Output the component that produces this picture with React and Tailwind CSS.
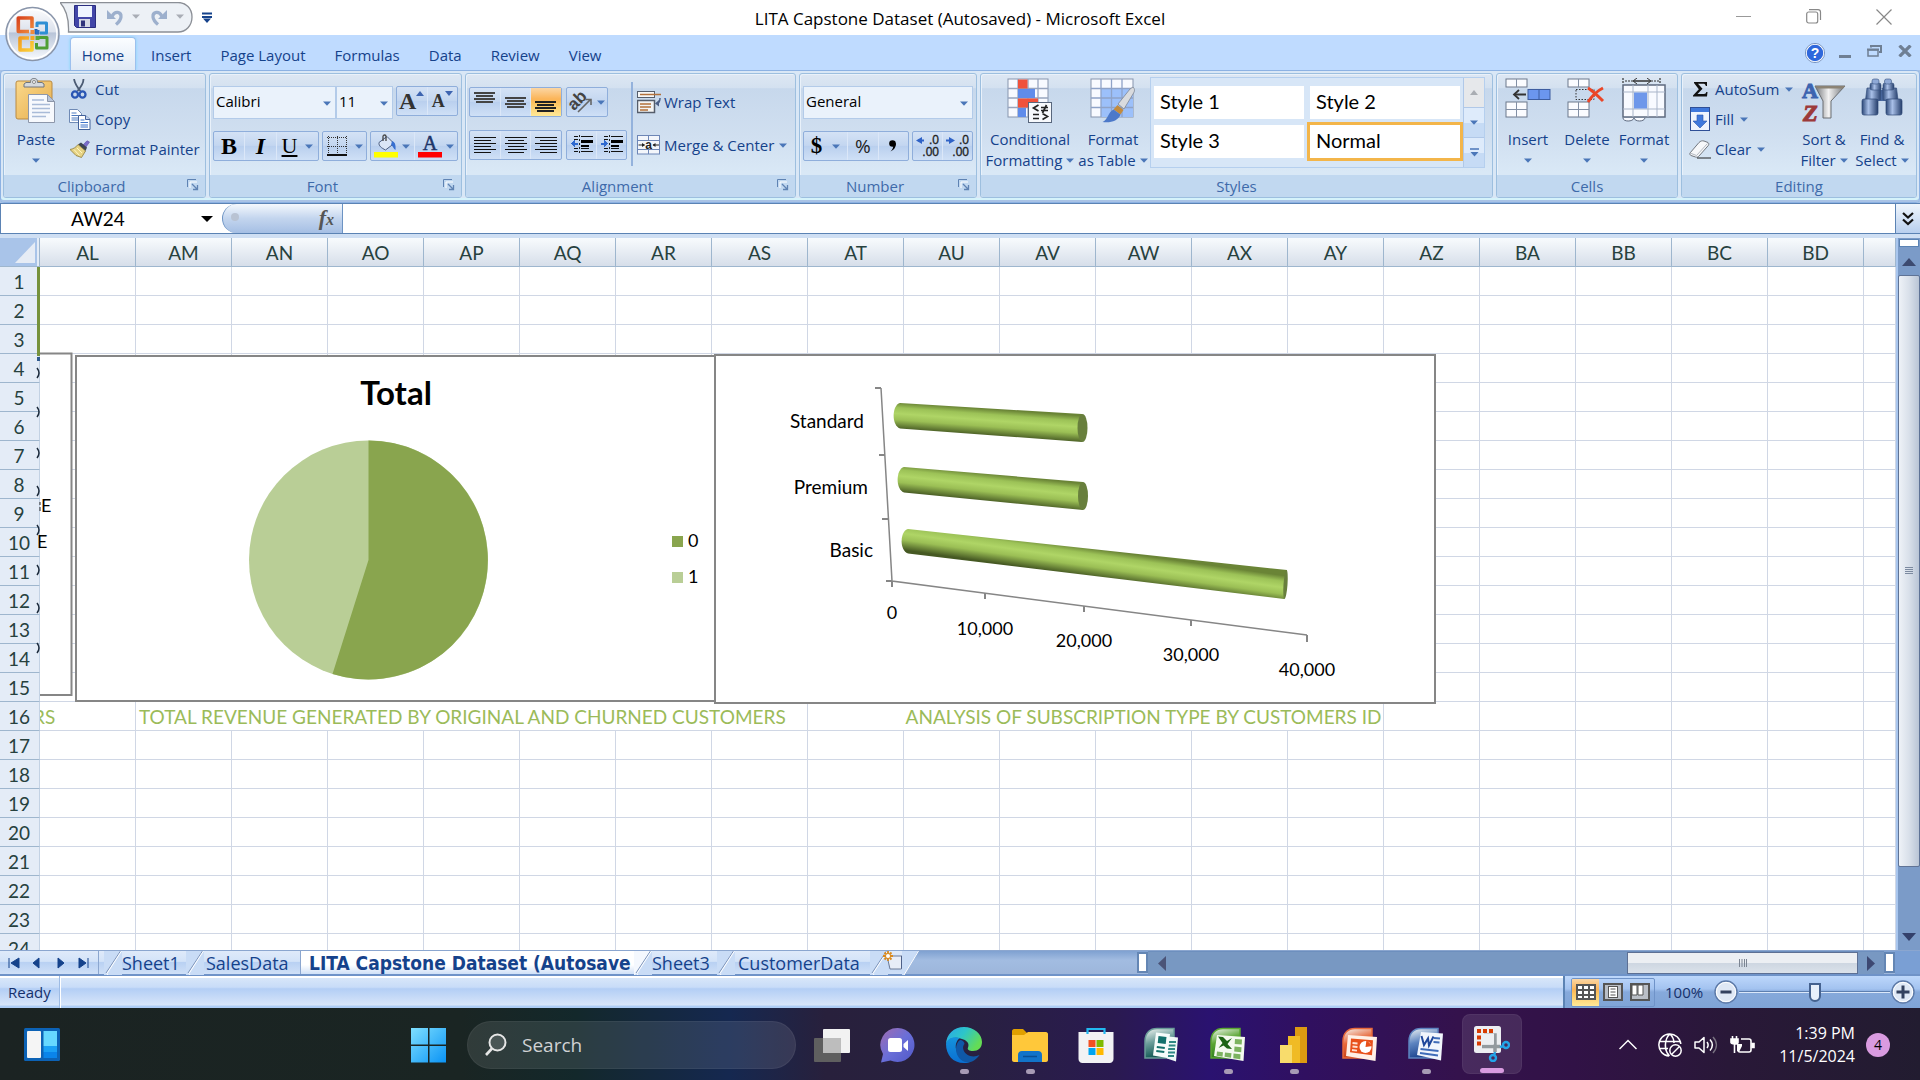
import React from "react";

const UI = "font-['Open_Sans','Noto_Sans',sans-serif]";
const GRID = "font-[Lato,'Noto_Sans',sans-serif]";

const Down = ({ c = "#4a76b8" }) => (
  <svg width="8" height="5" viewBox="0 0 8 5" className="shrink-0"><path d="M0 0.5h8L4 4.8z" fill={c} /></svg>
);

/* ---------- small drawing helpers ---------- */
const Lines = ({ rows, c = "#111", w = 24, h = 20 }) => (
  <svg width={w} height={h} viewBox={`0 0 ${w} ${h}`} shapeRendering="crispEdges">
    {rows.map(([x, y, l, t = 1], i) => <rect key={i} x={x} y={y} width={l} height={t} fill={c} />)}
  </svg>
);

const PasteIcon = () => (
  <svg width="42" height="46" viewBox="0 0 42 46">
    <defs><linearGradient id="pst" x1="0" y1="0" x2="1" y2="1"><stop offset="0" stopColor="#fbd98c" /><stop offset="1" stopColor="#e5ad4c" /></linearGradient></defs>
    <rect x="1" y="3" width="36" height="38" rx="2" fill="url(#pst)" stroke="#b98a42" />
    <path d="M9 9V6l2-1.500h4.500C15.500 1 17 .5 19 .5s3.500.5 3.500 4H27L29 6v3z" fill="#d5d9dd" stroke="#70757c" />
    <circle cx="19" cy="4" r="1.500" fill="#fff" stroke="#666" strokeWidth=".7" />
    <path d="M13.500 16.500h19l7 7v21h-26z" fill="#f7f9fd" stroke="#8d97aa" />
    <path d="M32.500 16.500v7h7z" fill="#b9c5d9" stroke="#8d97aa" />
    <path d="M17 22h12M17 26.500h18M17 30.500h18M17 34.500h18M17 38.500h14" stroke="#a9bbd8" strokeWidth="1.300" />
  </svg>
);
const CutIcon = () => (
  <svg width="20" height="20" viewBox="0 0 20 20">
    <path d="M4 0c1 5 3 8 6.500 12M13.500 0c0 5-2.500 8-6 12" stroke="#4b5b73" strokeWidth="1.800" fill="none" />
    <ellipse cx="5" cy="15.500" rx="3" ry="3.200" fill="none" stroke="#2a56b4" strokeWidth="2.300" />
    <ellipse cx="12.500" cy="15.500" rx="3" ry="3.200" fill="none" stroke="#2a56b4" strokeWidth="2.300" />
  </svg>
);
const CopyIcon = () => (
  <svg width="22" height="21" viewBox="0 0 22 21">
    <path d="M.5.500h8l4 4v9H.5z" fill="#fff" stroke="#6f8ab5" /><path d="M2.500 4h5M2.500 6.500h7M2.500 9h7M2.500 11h7" stroke="#4d7ac0" />
    <path d="M9.500 6.500h7l4.500 4v10H9.500z" fill="#fff" stroke="#43629b" /><path d="M16.500 6.500v4H21" fill="#c8d6ee" stroke="#43629b" /><path d="M11.500 11h4M11.500 13.500h7.500M11.500 16h7.500M11.500 18h7.500" stroke="#3f73c8" />
  </svg>
);
const PainterIcon = () => (
  <svg width="20" height="18" viewBox="0 0 20 18">
    <path d="M13 5L17 0.800 19.500 2 16 7z" fill="#7a6cc9" stroke="#5a4da4" strokeWidth=".6" />
    <path d="M8 4.500l3-2 6 5-1.500 3.500z" fill="#3d4653" />
    <path d="M8 4.500L15.500 11 11.500 17.500 6 15.500 0 9.500C3 9 6 7.500 8 4.500z" fill="#e6d384" stroke="#8f7b36" strokeWidth=".8" />
    <path d="M4 9.500l5.500 6M7 8l5 5" stroke="#fff6c4" />
  </svg>
);
const FillColor = () => (
  <svg width="24" height="24" viewBox="0 0 24 24">
    <path d="M5 8.500L13 2.500l7 7-8.500 6.500c-4-2-7-4-6.500-7.500z" fill="#dbe6f6" stroke="#4c5e80" />
    <path d="M9 7V2.500C9 .5 12 .5 12 2.500V7" fill="none" stroke="#444" strokeWidth="1.300" />
    <path d="M18 7c3 1 4 4 3.500 9-2-1-2.500-4-4.500-5z" fill="#376fd0" />
    <rect y="18" width="24" height="5.500" fill="#ffff00" />
  </svg>
);
const BorderIcon = () => (
  <svg width="20" height="21" viewBox="0 0 20 21" shapeRendering="crispEdges">
    <path d="M0 1h20M0 10h20M1 0v17M10 0v17M19 0v17" stroke="#333" strokeWidth="1" strokeDasharray="1 1" />
    <rect y="18" width="20" height="2" fill="#111" />
  </svg>
);
const OrientIcon = () => (
  <svg width="24" height="22" viewBox="0 0 24 22" className="overflow-visible">
    <text x="-1" y="16" transform="rotate(-45 7 11)" fontSize="17" fontWeight="700" fontFamily="Liberation Sans" fill="#444">ab</text>
    <path d="M9 21L21 9M16.500 8.500H22V14" stroke="#666" strokeWidth="1.600" fill="none" />
  </svg>
);
const IndentIcon = ({ inc }) => (
  <svg width="22" height="20" viewBox="0 0 22 20" shapeRendering="crispEdges">
    <path d="M3 1.500h4M10 1.500h12M10 13.500h8M3 16.500h4M10 16.500h12M3 4h4M3 13.500h4" stroke="#111" />
    <rect x="10" y="5" width="12" height="3" /><rect x="10" y="10" width="8" height="2" />
    <path d="M8.500 0v20" stroke="#222" strokeDasharray="2 2" />
    <path d={inc ? "M0 8.500h5" : "M2 8.500h5"} stroke="#2f6ad0" strokeWidth="2" />
    <path d={inc ? "M3 5l4 3.500L3 12z" : "M4 5L0 8.500 4 12z"} fill="#2f6ad0" />
  </svg>
);
const WrapIcon = () => (
  <svg width="24" height="23" viewBox="0 0 24 23">
    <rect x=".5" y=".5" width="17" height="6" fill="#f7f7f7" stroke="#555d6b" /><path d="M3 3.500h21" stroke="#b3703a" strokeWidth="1.500" />
    <rect x=".5" y="9.500" width="17" height="12" fill="#f4f4f4" stroke="#555d6b" strokeWidth="1.500" /><path d="M3 13h11M3 16h11M3 19h8" stroke="#b3703a" strokeWidth="1.400" />
    <path d="M23 7c0 4-1 5-3 5.500" fill="none" stroke="#4c5f86" strokeWidth="1.500" /><path d="M22 9l-4 3.500 4 3z" fill="#4c5f86" />
  </svg>
);
const MergeIcon = () => (
  <svg width="24" height="20" viewBox="0 0 24 20">
    <rect x=".5" y=".5" width="22" height="18.500" fill="#f3f6fb" stroke="#6d86b6" /><path d="M.5 5.500h22M.5 14.500h22M11.500 .5v5M11.500 14.500V19" stroke="#6d86b6" />
    <path d="M1.500 10h6M16 10h6" stroke="#222" strokeWidth="1.200" /><path d="M5 8v4l3-2zM18.500 8v4l-3-2z" fill="#222" />
    <text x="11.500" y="14" textAnchor="middle" fontSize="12" fontWeight="700" fontFamily="Liberation Sans" fill="#222">a</text>
  </svg>
);
const DecIcon = ({ right }) => (
  <svg width="24" height="26" viewBox="0 0 24 26">
    <path d={right ? "M0 7.500h5" : "M2 7.500h6"} stroke="#2f62c6" strokeWidth="2" /><path d={right ? "M3 4l6 3.500L3 11z" : "M6 4L0 7.500 6 11z"} fill="#2f62c6" />
    <g textAnchor="end" fontSize="12" fontFamily="Liberation Sans" fill="#222" stroke="#222" strokeWidth=".3">
      <text x="23" y="11">.0</text><text x="23" y="23">.00</text>
    </g>
  </svg>
);
const CondIcon = () => (
  <svg width="46" height="46" viewBox="0 0 46 46">
    <rect x="1" y="1" width="40" height="38" fill="#f8faff" stroke="#8795ad" />
    <path d="M1 10.500h40M1 20h40M1 29.500h40M11 1v38M21 1v38M31 1v38" stroke="#97a5bf" strokeWidth="1.300" />
    <rect x="11" y="1.500" width="9.500" height="9" fill="#f0523c" /><rect x="11" y="11" width="17" height="9" fill="#5f8ceb" /><rect x="11" y="20.500" width="20" height="9" fill="#f0523c" /><rect x="11" y="30" width="8" height="9" fill="#5f8ceb" />
    <rect x="21.500" y="24.500" width="23" height="20" fill="#f7f9fc" stroke="#59677d" />
    <path d="M31.500 27l-5 3 5 3M26 36.500h6M26 40.500h6M34 29.500h7M34 32.500h7M39.500 27l-4 8M35.500 35.500l5 3-5 3" fill="none" stroke="#222" strokeWidth="1.700" />
  </svg>
);
const TableIcon = () => (
  <svg width="46" height="46" viewBox="0 0 46 46">
    <rect x="1" y="1" width="42" height="38" fill="#f8faff" stroke="#8795ad" /><rect x="11" y="11" width="32" height="28" fill="#9cc0fa" />
    <path d="M1 10.500h42M1 20h42M1 29.500h42M11 1v38M21.500 1v38M32 1v38" stroke="#8fa3c8" strokeWidth="1.300" />
    <path d="M43 9c2 2 2 4 0 7L34 31l-6-5 12-15z" fill="#d9dbde" stroke="#7d8794" strokeWidth=".8" />
    <path d="M27.500 27l6 5-3 4.500-7-5z" fill="#c38b3d" /><path d="M23.500 31.500l7 5C28 43 21 45 12.500 44 18 42 18 34 23.500 31.500z" fill="#4d79c9" />
  </svg>
);
const CellRows = ({ x, y }) => (
  <g><rect x={x} y={y} width="21" height="15" fill="#fbfcff" stroke="#6c788c" /><path d={`M${x} ${y + 7.500}h21M${x + 10.500} ${y}v15`} stroke="#8390a5" /></g>
);
const InsertIcon = () => (
  <svg width="46" height="42" viewBox="0 0 46 42">
    <rect x="1" y="1" width="21" height="8" fill="#fbfcff" stroke="#6c788c" /><path d="M11.500 1v8" stroke="#8390a5" /><CellRows x={1} y={24} />
    <rect x="23" y="11.500" width="22" height="10" fill="#6b96ee" stroke="#3d5da0" /><path d="M34 11.500v10" stroke="#3d5da0" />
    <path d="M10 16.500h11" stroke="#333" strokeWidth="2" /><path d="M14 12l-5 4.500 5 4.500" fill="none" stroke="#333" strokeWidth="1.800" />
  </svg>
);
const DeleteIcon = () => (
  <svg width="40" height="42" viewBox="0 0 40 42">
    <rect x="1" y="1" width="21" height="8" fill="#fbfcff" stroke="#6c788c" /><path d="M11.500 1v8" stroke="#8390a5" /><CellRows x={1} y={24} />
    <rect x="9" y="11.500" width="18" height="10" fill="none" stroke="#333" strokeDasharray="1.500 1.500" />
    <path d="M21 10c5 3 10 8 15 13M36 10c-6 3-11 8-15 14" stroke="#ea4627" strokeWidth="3" fill="none" />
  </svg>
);
const FormatIcon = () => (
  <svg width="46" height="46" viewBox="0 0 46 46">
    <path d="M2 0v6M39 0v6M4 3h8M30 3h8" stroke="#333" strokeWidth="1.200" strokeDasharray="2 1" /><path d="M13 3h16" stroke="#333" strokeWidth="1.500" /><path d="M16 0l-4 3 4 3M26 0l4 3-4 3" fill="none" stroke="#333" />
    <rect x="2" y="7" width="42" height="32" fill="#f8faff" stroke="#5e6a7f" strokeWidth="1.500" /><path d="M2 14h42M2 31h42M12 7v32M27 7v32M36 7v32" stroke="#a9b5c9" />
    <rect x="13" y="14.500" width="13" height="16" fill="#6e97ea" /><path d="M2 40c0 4 10 4 11 0 1 4 10 4 11 0" fill="#f8faff" stroke="#5e6a7f" />
  </svg>
);
const SortIcon = () => (
  <svg width="46" height="49" viewBox="0 0 46 49">
    <defs><linearGradient id="fun" x1="0" x2="1"><stop offset="0" stopColor="#6f7276" /><stop offset=".45" stopColor="#f2f2f2" /><stop offset="1" stopColor="#707377" /></linearGradient></defs>
    <path d="M14 8h30L30 23v17h-8V23z" fill="url(#fun)" stroke="#6b6e72" /><path d="M14 8h30l-2 2.500H17z" fill="#8b8375" />
    <text x="1" y="20" fontSize="22" fontWeight="700" fontFamily="Liberation Serif" fill="#3d64b0" stroke="#3d64b0">A</text>
    <text x="2" y="43" fontSize="24" fontWeight="700" fontStyle="italic" fontFamily="Liberation Serif" fill="#9c3a3a" stroke="#9c3a3a">Z</text>
  </svg>
);
const FindIcon = () => (
  <svg width="42" height="40" viewBox="0 0 42 40">
    <defs><linearGradient id="bin" x1="0" x2="1"><stop offset="0" stopColor="#2c4878" /><stop offset=".4" stopColor="#a9c0e8" /><stop offset="1" stopColor="#263f6c" /></linearGradient></defs>
    <rect x="17" y="12" width="8" height="11" fill="#49679e" />
    {[0, 24].map((x) => (
      <g key={x}>
        <path d={x ? "M21.500 10h14l1.500 12H22z" : "M6 10h14l-.5 12H4.500z"} fill="url(#bin)" stroke="#36527f" strokeWidth=".7" />
        <rect x={x ? 22 : 9} y="5" width="11" height="7" rx="2" fill="url(#bin)" stroke="#36527f" strokeWidth=".6" /><rect x={x ? 23.500 : 11} y="1" width="7" height="5" rx="2" fill="#8fa9d6" stroke="#36527f" strokeWidth=".6" />
        <rect x={x + 1} y="21" width="16" height="16" rx="2" fill="url(#bin)" stroke="#2e4977" strokeWidth=".7" />
      </g>
    ))}
  </svg>
);

/* ---------- ribbon pieces ---------- */
const Group = ({ name, w, launcher, children }) => (
  <section className={`${w} flex flex-col rounded-[3px] border border-[#9dbfdf] bg-[linear-gradient(180deg,#dde7f3_0%,#d4e1f0_11%,#c7d8ec_12%,#d0dff0_50%,#d9e8f6_80%)] shadow-[inset_1px_1px_0_#e9f1fa]`}>
    <div className="flex h-[101px] min-w-0">{children}</div>
    <div className={`relative flex flex-1 items-center justify-center rounded-b-[2px] bg-[#c1d8f0] text-[15px] leading-5 text-[#3e6aaa] ${launcher ? "pr-[26px]" : ""}`}>
      {name}
      {launcher && (
        <button aria-label={`${name} options`} className="absolute right-1.5 top-1">
          <svg width="12" height="12" viewBox="0 0 12 12"><path d="M.5 8V.500H9" fill="none" stroke="#5f83b3" /><path d="M5 5l5 5M10.500 6v4.500H6" stroke="#5f83b3" strokeWidth="1.300" fill="none" /><path d="M3 9V3h7" stroke="#fff" fill="none" /></svg>
        </button>
      )}
    </div>
  </section>
);
const BtnSet = ({ w, children }) => (
  <div className={`flex h-[30px] ${w} divide-x divide-[#dbe7f8] rounded-[2px] border border-[#8faedb] bg-[linear-gradient(180deg,#d4e2f5_0%,#c3d6f0_48%,#b9cfee_50%,#cfe0f6_100%)]`}>{children}</div>
);
const IB = ({ label, w = "flex-1", on, children }) => (
  <button aria-label={label} className={`flex ${w} items-center justify-center gap-1 ${on ? "bg-[linear-gradient(180deg,#fbd6a4_0%,#fbb457_40%,#fdc562_55%,#ffe997_100%)]" : ""}`}>{children}</button>
);
const Row = ({ icon, children, arrow }) => (
  <button className="flex h-[30px] items-center gap-1 whitespace-nowrap text-[15px] text-[#15428b]">
    <span className="flex w-[22px] justify-center">{icon}</span>{children}{arrow && <span className="pl-0.5"><Down /></span>}
  </button>
);
const Big = ({ icon, a, b, w }) => (
  <button className={`flex ${w} shrink-0 flex-col items-center pt-1 text-[15px] leading-[21px] text-[#15428b]`}>
    <span className="flex h-[51px] items-start">{icon}</span>
    <span className="whitespace-nowrap">{a}</span>
    <span className="flex h-[21px] items-center gap-1 whitespace-nowrap">{b}<Down /></span>
  </button>
);
const Combo = ({ label, value, w }) => (
  <div className={`relative h-[33px] ${w} border border-[#b3cbe9] bg-[#eaf2fb]`}>
    <select aria-label={label} className="h-7 w-full appearance-none bg-transparent px-0.5 text-[15px] text-black outline-none"><option>{value}</option></select>
    <span className="pointer-events-none absolute right-1 top-3.5 flex"><Down /></span>
  </div>
);
const GStyle = ({ children, on }) => (
  <button className={`h-[33px] bg-white px-1.5 pb-0.5 text-left text-[20px] leading-6 text-black ${GRID} ${on ? "outline-3 outline-[#f3b54a]" : ""}`}>{children}</button>
);

function TitleBar() {
  return (
    <header className="relative flex h-[35px] shrink-0 items-center justify-center bg-white">
      <div className="absolute left-[60px] top-0.5 flex items-center">
        <svg width="134" height="31" viewBox="0 0 134 31" className="absolute left-0 top-0"><path d="M0 .5h118c8 0 14 6 14 14.500S126 30 118 30H8.500C9 18 7 8 0 .5z" fill="#edf1f6" stroke="#8b8f96" strokeWidth="1.300" /></svg>
        <div className="relative flex h-[29px] items-center pl-3.5">
          <button aria-label="Save"><svg width="22" height="23" viewBox="0 0 22 23"><path d="M.5.500h21v22H2.500l-2-2z" fill="#4246a8" stroke="#2b2e80" /><rect x="4" y="1" width="14" height="11" fill="#eef4ff" /><rect x="5" y="14" width="11" height="8" fill="#d6dae6" /><rect x="7" y="15.500" width="4" height="6" fill="#30347c" /></svg></button>
          <button aria-label="Undo" className="ml-2.5 flex items-center gap-2"><svg width="18" height="18" viewBox="0 0 18 18"><path d="M6 8.500C9 2 15.500 4 15 9c-.3 3-2 5-5 7.500" fill="none" stroke="#9db0cd" strokeWidth="3.200" /><path d="M1 2v9h9z" fill="#9db0cd" /></svg><Down c="#a9adb5" /></button>
          <button aria-label="Redo" className="ml-2.5 flex items-center gap-2"><svg width="18" height="18" viewBox="0 0 18 18"><path d="M12 8.500C9 2 2.500 4 3 9c.3 3 2 5 5 7.500" fill="none" stroke="#9db0cd" strokeWidth="3.200" /><path d="M17 2v9H8z" fill="#9db0cd" /></svg><Down c="#a9adb5" /></button>
        </div>
      </div>
      <button aria-label="Customize toolbar" className="absolute left-[202px] top-3"><svg width="10" height="12" viewBox="0 0 10 12"><path d="M0 1.500h10M0 5h10" stroke="#15428b" strokeWidth="2" /><path d="M1 6.500h8L5 11z" fill="#15428b" /></svg></button>
      <h1 className="pt-0.5 text-[17px] text-black">LITA Capstone Dataset (Autosaved) - Microsoft Excel</h1>
      <div className="absolute right-7 top-2 flex items-center gap-[54px]">
        <button aria-label="Minimize"><svg width="16" height="18" viewBox="0 0 16 18"><path d="M0 8.500h15" stroke="#999" /></svg></button>
        <button aria-label="Restore"><svg width="16" height="18" viewBox="0 0 16 18"><rect x=".7" y="4" width="11" height="11" rx="2" fill="none" stroke="#888" strokeWidth="1.200" /><path d="M3 1.600h9c2 0 2.500 1 2.500 2.500V12" fill="none" stroke="#888" strokeWidth="1.200" /></svg></button>
        <button aria-label="Close"><svg width="16" height="18" viewBox="0 0 16 18"><path d="M.5 1.500l15 15M15.500 1.500L.5 16.500" stroke="#888" strokeWidth="1.200" /></svg></button>
      </div>
    </header>
  );
}

const OfficeButton = () => (
  <button aria-label="Office Button" className="absolute left-1 top-1.5 z-20">
    <svg width="57" height="57" viewBox="0 0 57 57">
      <defs>
        <linearGradient id="orb" x1="0" y1="0" x2="0" y2="1"><stop offset="0" stopColor="#fdfdfe" /><stop offset=".46" stopColor="#dbe1ec" /><stop offset=".48" stopColor="#b8c4d8" /><stop offset="1" stopColor="#fafcff" /></linearGradient>
        <linearGradient id="lgo" x1="0" y1="0" x2="1" y2="1"><stop offset="0" stopColor="#d8431c" /><stop offset="1" stopColor="#f08a3c" /></linearGradient>
        <linearGradient id="lgy" x1="0" y1="0" x2="1" y2="1"><stop offset="0" stopColor="#f39b1e" /><stop offset="1" stopColor="#fbd03a" /></linearGradient>
      </defs>
      <circle cx="28.500" cy="28" r="26.500" fill="url(#orb)" stroke="#8995aa" strokeWidth="1.500" /><circle cx="28.500" cy="28" r="24.500" fill="none" stroke="#fff" strokeWidth="1.500" />
      <g fill="none" strokeWidth="3.600" strokeLinejoin="round">
        <path d="M25 25.500H14.300V12H28V22" stroke="url(#lgo)" /><path d="M33 21v-4h9.500v10H36" stroke="#2f8fd4" strokeWidth="3" /><path d="M32 23v4h3" stroke="#1f5fb0" strokeWidth="3" />
        <path d="M25 32H16v12h12V35" stroke="url(#lgy)" /><path d="M35 31.500h8V42H32.500v-5" stroke="#4f9f34" strokeWidth="3" />
      </g>
      <rect x="26.500" y="24" width="4" height="4" fill="#f08a3c" /><rect x="31.500" y="24" width="4" height="4" fill="#2a6fc4" /><rect x="26.500" y="30" width="4" height="4" fill="#f5a623" /><rect x="31.500" y="30" width="4" height="4" fill="#5aa63a" />
    </svg>
  </button>
);

function Tabs() {
  const tabs = ["Insert", "Page Layout", "Formulas", "Data", "Review", "View"];
  return (
    <nav className="flex h-[35px] shrink-0 items-end bg-[#bfdbff] pl-[70px]">
      <button className="h-[33px] w-[66px] rounded-t-[4px] border border-b-0 border-[#9cc0ee] bg-[linear-gradient(180deg,#fbfdff,#dfe9f5)] pt-0.5 text-[15px] leading-5 text-[#15428b] shadow-[0_0_3px_#7fd6f5]">Home</button>
      <div className="flex h-[33px] items-center gap-[29px] pl-[15px] pt-[3px] text-[15px] text-[#15428b]">
        {tabs.map((t) => <button key={t}>{t}</button>)}
      </div>
      <div className="ml-auto flex h-[33px] items-center pr-2">
        <button aria-label="Help" className="pb-0.5"><svg width="20" height="20" viewBox="0 0 20 20"><circle cx="10" cy="10" r="9" fill="#2f68dc" stroke="#fff" strokeWidth="1.500" /><circle cx="10" cy="10" r="9.600" fill="none" stroke="#4a6fa8" strokeWidth=".7" /><text x="10" y="15" textAnchor="middle" fontSize="14" fontWeight="700" fontFamily="Liberation Sans" fill="#fff">?</text></svg></button>
        <button aria-label="Minimize workbook" className="ml-3.5 pt-1.5"><svg width="12" height="4"><rect width="12" height="3" fill="#6f7f94" /></svg></button>
        <button aria-label="Restore workbook" className="ml-4 pb-1.5"><svg width="15" height="12" viewBox="0 0 15 12"><path d="M4 2.500V1h10v6h-2" fill="none" stroke="#6f7f94" strokeWidth="2" /><rect x="1" y="5" width="10" height="6" fill="none" stroke="#6f7f94" strokeWidth="1.500" /><path d="M0 4.500h12" stroke="#6f7f94" strokeWidth="2" /></svg></button>
        <button aria-label="Close workbook" className="ml-4 pb-1.5"><svg width="14" height="12" viewBox="0 0 14 12"><path d="M1.500 0.500L12.500 11.500M12.500.5L1.500 11.500" stroke="#6f7f94" strokeWidth="3.200" /></svg></button>
      </div>
    </nav>
  );
}

function Ribbon() {
  return (
    <div className="shrink-0 bg-[#a9c3e6]">
      <div className="flex h-[133px] gap-[3px] rounded-[4px] border border-[#8db2e3] bg-[#d9e7f6] px-0.5 pb-1 pt-0.5 shadow-[inset_0_-2px_0_#a9c3e6,inset_0_-4px_0_#d5f3fb]">
        <Group name="Clipboard" w="w-[203px]" launcher>
          <Big w="w-[64px]" icon={<PasteIcon />} a="Paste" />
          <div className="flex flex-col pl-px"><Row icon={<CutIcon />}>Cut</Row><Row icon={<CopyIcon />}>Copy</Row><Row icon={<PainterIcon />}>Format Painter</Row></div>
        </Group>
        <Group name="Font" w="w-[253px]" launcher>
          <div className="flex flex-1 flex-col gap-3 px-[3px] pt-3">
            <div className="flex gap-[3px]">
              <div className="flex"><Combo label="Font" value="Calibri" w="w-[123px]" /><Combo label="Font size" value="11" w="w-[57px]" /></div>
              <BtnSet w="flex-1">
                <IB label="Grow font"><span className="flex items-start font-['Liberation_Serif',serif] text-[24px] font-bold leading-7 text-[#333]">A<svg width="8" height="5" viewBox="0 0 8 5" className="mt-1"><path d="M0 5h8L4 0z" fill="#3d64b0" /></svg></span></IB>
                <IB label="Shrink font"><span className="flex items-end font-['Liberation_Serif',serif] text-[18px] font-bold leading-[22px] text-[#333]">A<svg width="8" height="18" viewBox="0 0 8 18" className="self-start"><path d="M0 1h8L4 6z" fill="#3d64b0" /></svg></span></IB>
              </BtnSet>
            </div>
            <div className="flex justify-between">
              <BtnSet w="w-[106px]">
                <IB label="Bold" w="w-[31px]"><span className="font-['Liberation_Serif',serif] text-[24px] font-bold leading-7">B</span></IB>
                <IB label="Italic" w="w-[32px]"><span className="font-['Liberation_Serif',serif] text-[24px] font-bold italic leading-7">I</span></IB>
                <IB label="Underline"><span className="font-['Liberation_Serif',serif] text-[22px] leading-7 underline">U</span><span className="pl-1"><Down /></span></IB>
              </BtnSet>
              <BtnSet w="w-[45px]"><IB label="Borders"><BorderIcon /><span className="pl-1"><Down /></span></IB></BtnSet>
              <BtnSet w="w-[88px]">
                <IB label="Fill color"><FillColor /><Down /></IB>
                <IB label="Font color"><svg width="24" height="24" viewBox="0 0 24 24" className="overflow-visible"><text x="12" y="16" textAnchor="middle" fontSize="20" fontFamily="Liberation Serif" fill="#1c3468" stroke="#1c3468" strokeWidth=".5">A</text><rect y="18" width="24" height="5.500" fill="#f00" /></svg><Down /></IB>
              </BtnSet>
            </div>
          </div>
        </Group>
        <Group name="Alignment" w="w-[331px]" launcher>
          <div className="flex flex-col gap-[13px] pl-[3px] pt-[13px]">
            <div className="flex gap-1">
              <BtnSet w="w-[93px]">
                <IB label="Top align"><Lines c="#444" rows={[[1, 0, 21, 2], [3, 3, 17, 2], [1, 6, 21, 2], [3, 9, 17, 2]]} /></IB>
                <IB label="Middle align"><Lines c="#444" rows={[[1, 5, 21, 2], [3, 8, 17, 2], [1, 11, 21, 2], [3, 14, 17, 2]]} /></IB>
                <IB label="Bottom align" on><Lines c="#222" rows={[[1, 9, 21, 2], [3, 12, 17, 2], [1, 15, 21, 2], [3, 18, 17, 2]]} /></IB>
              </BtnSet>
              <BtnSet w="w-[42px]"><IB label="Orientation"><OrientIcon /><Down /></IB></BtnSet>
            </div>
            <div className="flex gap-1">
              <BtnSet w="w-[93px]">
                <IB label="Align left"><Lines rows={[[1, 2, 22], [1, 5, 17], [1, 8, 22], [1, 11, 17], [1, 14, 22], [1, 17, 17]]} /></IB>
                <IB label="Center"><Lines rows={[[1, 2, 22], [4, 5, 16], [1, 8, 22], [4, 11, 16], [1, 14, 22], [4, 17, 16]]} /></IB>
                <IB label="Align right"><Lines rows={[[1, 2, 22], [6, 5, 17], [1, 8, 22], [6, 11, 17], [1, 14, 22], [6, 17, 17]]} /></IB>
              </BtnSet>
              <BtnSet w="w-[61px]"><IB label="Decrease indent"><IndentIcon /></IB><IB label="Increase indent"><IndentIcon inc /></IB></BtnSet>
            </div>
          </div>
          <div className="mx-1 mt-2 h-[84px] w-0.5 bg-[#94b2dc]" />
          <div className="flex flex-col gap-[13px] pt-[13px] text-[15px] text-[#15428b]">
            <button className="flex h-[30px] items-center gap-[3px]"><WrapIcon />Wrap Text</button>
            <button className="flex h-[30px] items-center gap-[3px] whitespace-nowrap"><MergeIcon />Merge &amp; Center<span className="pl-0.5"><Down /></span></button>
          </div>
        </Group>
        <Group name="Number" w="w-[178px]" launcher>
          <div className="flex flex-1 flex-col gap-3 px-[3px] pt-3">
            <Combo label="Number format" value="General" w="w-full" />
            <div className="flex justify-between">
              <BtnSet w="w-[106px]">
                <IB label="Accounting format" w="w-[44px]"><span className="font-['Liberation_Serif',serif] text-[23px] font-bold leading-7">$</span><span className="pl-1.5"><Down /></span></IB>
                <IB label="Percent"><span className="text-[19px] leading-7 text-[#222]">%</span></IB>
                <IB label="Comma"><svg width="8" height="12" viewBox="0 0 8 12"><circle cx="3.500" cy="3.500" r="3.300" /><path d="M6.800 3c.5 4-1.800 7-5.300 8.500C4 9 4.500 7 4 5z" /></svg></IB>
              </BtnSet>
              <BtnSet w="w-[61px]"><IB label="Increase decimal"><DecIcon /></IB><IB label="Decrease decimal"><DecIcon right /></IB></BtnSet>
            </div>
          </div>
        </Group>
        <Group name="Styles" w="min-w-0 flex-1">
          <Big w="w-[98px]" icon={<CondIcon />} a="Conditional" b="Formatting" />
          <Big w="w-[68px]" icon={<TableIcon />} a="Format" b="as Table" />
          <div className="ml-[3px] mr-[7px] mt-[3px] flex h-[91px] flex-1 border border-[#b5cfee] bg-[#d7e6f7]">
            <div className="grid flex-1 grid-cols-2 content-center gap-1.5 px-[3px] pb-0.5"><GStyle>Style 1</GStyle><GStyle>Style 2</GStyle><GStyle>Style 3</GStyle><GStyle on>Normal</GStyle></div>
            <div className="flex w-[21px] flex-col divide-y divide-[#b0c8e8] border-l border-[#b0c8e8]">
              <button aria-label="Scroll up" className="flex flex-1 items-center justify-center bg-[#e6e8eb]"><svg width="8" height="5"><path d="M0 5h8L4 0z" fill="#a9adb3" /></svg></button>
              <button aria-label="Scroll down" className="flex flex-1 items-center justify-center bg-[linear-gradient(180deg,#deebfb_50%,#c6dbf5_50%)]"><Down /></button>
              <button aria-label="More styles" className="flex flex-1 items-center justify-center bg-[linear-gradient(180deg,#deebfb_50%,#c6dbf5_50%)]"><svg width="9" height="9" viewBox="0 0 9 9"><path d="M0 1h9" stroke="#4a76b8" strokeWidth="1.500" /><path d="M.5 4h8l-4 4.500z" fill="#4a76b8" /></svg></button>
            </div>
          </div>
        </Group>
        <Group name="Cells" w="w-[182px]">
          <Big w="w-[62px]" icon={<InsertIcon />} a="Insert" /><Big w="w-[56px]" icon={<DeleteIcon />} a="Delete" /><Big w="w-[58px]" icon={<FormatIcon />} a="Format" />
        </Group>
        <Group name="Editing" w="w-[236px]">
          <div className="flex w-[112px] flex-col pl-[7px]">
            <Row arrow icon={<svg width="15" height="16" viewBox="0 0 15 16"><path d="M1 1h13v4h-1.200c-.4-1.600-1-2.200-3-2.200H5l4.500 5L4.500 13H11c1.500 0 2-.8 2.300-2h1.200L14 15.500H0v-1L5.800 8.300 1 2z" fill="#111" /></svg>}>AutoSum</Row>
            <Row arrow icon={<svg width="20" height="24" viewBox="0 0 20 24"><rect x=".5" y=".5" width="19" height="23" fill="#eef3fd" stroke="#2f4f96" /><rect x="1" y="1" width="18" height="4" fill="#3f78dc" /><path d="M7 8h6v6h4l-7 7-7-7h4z" fill="#3f78dc" stroke="#2a55ab" strokeWidth=".6" /></svg>}>Fill</Row>
            <Row arrow icon={<svg width="22" height="19" viewBox="0 0 22 19"><path d="M1 13L10 2.500c1.500-1.500 3-2 5-1.500l4 1.500c1 .6 1 2 .3 3L10 16c-1 1-2 1.500-3.500 1L2 15.500C1 15 .5 14 1 13z" fill="#f7f8fa" stroke="#72777f" /><path d="M1 13l6.500 2.500L18.500 3.500" fill="none" stroke="#b3b8c0" /><path d="M8 18h14" stroke="#222" /></svg>}>Clear</Row>
          </div>
          <Big w="w-[60px]" icon={<SortIcon />} a="Sort &" b="Filter" /><Big w="w-[56px]" icon={<FindIcon />} a="Find &" b="Select" />
        </Group>
      </div>
    </div>
  );
}

function FormulaBar() {
  return (
    <div className="flex h-[31px] shrink-0 border-y border-[#5b83b4] bg-white">
      <div className="flex w-[214px] items-center border-l border-[#5b83b4] pr-0.5">
        <input aria-label="Name box" defaultValue="AW24" className={`w-[194px] pt-0.5 text-center text-[19px] text-black outline-none ${GRID}`} />
        <button aria-label="Name box list"><svg width="12" height="6" viewBox="0 0 12 6" className="ml-1.5"><path d="M0 0h12L6 6z" /></svg></button>
      </div>
      <div className="ml-2 flex w-[121px] items-center justify-between rounded-l-full border border-y-0 border-[#6c93c3] bg-[linear-gradient(180deg,#f4f8fd,#c3d5ee_50%,#a5bfe4)] pl-2 pr-2">
        <span className="mb-1 size-2 rounded-full bg-[#b9c3d3]" />
        <button aria-label="Insert function" className="font-['Liberation_Serif',serif] text-[22px] font-bold italic leading-6 text-[#555]">f<span className="text-[16px]">x</span></button>
      </div>
      <input aria-label="Formula bar" className="min-w-0 flex-1 px-1 outline-none" />
      <button aria-label="Expand formula bar" className="flex w-[25px] items-center justify-center border-l border-[#5b83b4] bg-[linear-gradient(180deg,#f0f6fd,#b8cfee)]">
        <svg width="12" height="14" viewBox="0 0 12 14"><path d="M1 1l5 4.500L11 1M1 7.500L6 12l5-4.500" fill="none" stroke="#111" strokeWidth="2.200" /></svg>
      </button>
    </div>
  );
}

/* ---------- sheet ---------- */
const COLS = ["AL", "AM", "AN", "AO", "AP", "AQ", "AR", "AS", "AT", "AU", "AV", "AW", "AX", "AY", "AZ", "BA", "BB", "BC", "BD", ""];
const CELL = "border-b border-r border-[#d0d7e5] p-0";
const TEXT = "pt-0.5 text-[19px] text-[#9bbb59] whitespace-nowrap";

function Sheet() {
  return (
    <table className={`w-full table-fixed border-separate border-spacing-0 text-[19px] leading-[26px] ${GRID}`}>
      <colgroup><col className="w-10" />{COLS.map((c, i) => <col key={i} className={c ? "w-24" : ""} />)}</colgroup>
      <thead>
        <tr className="h-[29px] bg-[linear-gradient(180deg,#f8fbfd,#d5dde9)] text-[#27413e]">
          <th className="border-b border-r border-[#9eb6ce] bg-[#a9c4e9] p-0" aria-label="Select all"><svg width="39" height="28" viewBox="0 0 39 28" className="block"><path d="M35 4v21H15z" fill="#e6ecf5" /><rect x="37" width="2" height="28" fill="#e4ecf7" /></svg></th>
          {COLS.map((c, i) => <th key={i} scope="col" className="border-b border-r border-[#9eb6ce] p-0 pt-0.5 font-normal">{c}</th>)}
        </tr>
      </thead>
      <tbody>
        {Array.from({ length: 24 }, (_, i) => i + 1).map((n) => (
          <tr key={n} className="h-[29px]">
            <th scope="row" className="border-b border-r border-[#9eb6ce] border-r-[#c3d2e4] bg-[#e4ecf7] p-0 pt-0.5 pr-px font-normal text-[#27413e]">{n}</th>
            {n === 16 ? (
              <>
                <td className={`${CELL} ${TEXT} overflow-hidden -indent-[7px]`}>RS</td>
                <td colSpan={7} className={`${CELL} ${TEXT} pl-[3px]`}>TOTAL REVENUE GENERATED BY ORIGINAL AND CHURNED CUSTOMERS</td>
                <td className="border-b border-[#d0d7e5]" />
                <td colSpan={5} className={`${CELL} ${TEXT} text-center`}>ANALYSIS OF SUBSCRIPTION TYPE BY CUSTOMERS ID</td>
                {COLS.slice(14).map((c, i) => <td key={i} className={CELL} />)}
              </>
            ) : COLS.map((c, i) => <td key={i} className={CELL} />)}
          </tr>
        ))}
      </tbody>
    </table>
  );
}

const PieChart = () => (
  <figure className="absolute left-[75px] top-[117px] h-[347px] w-[641px] border-2 border-[#868686] bg-white">
    <svg width="637" height="343" viewBox="77 357 637 343" fontFamily="Lato, Noto Sans, sans-serif">
      <text x="396" y="405" textAnchor="middle" fontSize="33" fontWeight="700">Total</text>
      <circle cx="368.500" cy="560" r="119.500" fill="#b9ce96" />
      <path d="M368.500 560V440.500A119.500 119.500 0 1 1 332.500 674z" fill="#89a54e" />
      <rect x="672" y="536" width="11" height="11" fill="#89a54e" /><rect x="672" y="572" width="11" height="11" fill="#b9ce96" />
      <text x="688" y="547" fontSize="18">0</text><text x="688" y="583" fontSize="18">1</text>
    </svg>
  </figure>
);

const BarChart = () => (
  <figure className="absolute left-[714px] top-[116px] h-[350px] w-[722px] border-2 border-[#868686] bg-white">
    <svg width="718" height="345" viewBox="716 356 718 345" fontFamily="Lato, Noto Sans, sans-serif">
      <defs>
        {[["gs", 990, 409, 988, 436], ["gp", 993, 474, 990, 502], ["gb", 1097, 549, 1093, 577]].map(([id, x1, y1, x2, y2]) => (
          <linearGradient key={id} id={id} gradientUnits="userSpaceOnUse" x1={x1} y1={y1} x2={x2} y2={y2}>
            <stop offset="0" stopColor="#6a8436" /><stop offset=".2" stopColor="#9cc257" /><stop offset=".42" stopColor="#afd566" /><stop offset=".65" stopColor="#9bbf55" /><stop offset="1" stopColor="#465923" />
          </linearGradient>
        ))}
      </defs>
      <path d="M900 403c-8 2-9 22 0 25.500L1082 442V414z" fill="url(#gs)" />
      <ellipse cx="1082.500" cy="428" rx="5" ry="14" fill="#687f3d" />
      <path d="M904 467c-8 2-9 22 0 25.500l179 17.500V482z" fill="url(#gp)" />
      <ellipse cx="1083" cy="496" rx="5" ry="14" fill="#687f3d" />
      <path d="M908 529c-8 2-9 21 0 24.500L1284 599l3-29z" fill="url(#gb)" />
      <ellipse cx="1285.500" cy="584.500" rx="2" ry="14.500" transform="rotate(4 1285.500 584.500)" fill="#687f3d" />
      <g fill="none" stroke="#868686" strokeWidth="1.500">
        <path d="M881 388L892 581 1307 635" />
        <path d="M875 388h6M879 455h6M882 519h6M886 581h6M892 581v6M985 593v6M1084 606v6M1191 620v6M1307 635v7" strokeWidth="2" />
      </g>
      <g textAnchor="end" fontSize="19"><text x="864" y="428">Standard</text><text x="868" y="494">Premium</text><text x="873" y="557">Basic</text></g>
      <g textAnchor="middle" fontSize="18"><text x="892" y="619">0</text><text x="985" y="635">10,000</text><text x="1084" y="647">20,000</text><text x="1191" y="661">30,000</text><text x="1307" y="676">40,000</text></g>
    </svg>
  </figure>
);

const ClippedChart = () => (
  <figure className="absolute left-9 top-[29px] w-[37px]">
    <svg width="37" height="430" viewBox="36 267 37 430" fontFamily="Lato, Noto Sans, sans-serif" fontSize="18">
      <rect x="40" y="354" width="31.500" height="341" fill="#fff" />
      <path d="M38 353.500h33.500V695H40" fill="none" stroke="#868686" strokeWidth="2" />
      <rect x="37" y="267" width="3" height="89" fill="#76923c" /><rect x="37" y="357" width="3" height="4" fill="#2f5a8f" />
      {[373, 412, 453, 491, 530, 570, 608, 648].map((y) => <path key={y} d={`M37 ${y - 5}q4 5 0 10`} fill="none" stroke="#1c2b3c" strokeWidth="1.500" />)}
      <text x="51.500" y="512" textAnchor="end">E</text><path d="M40 502v3M40 507v4" stroke="#222" />
      <text x="47.500" y="548" textAnchor="end">E</text>
    </svg>
  </figure>
);

const VScroll = () => (
  <div className="flex w-6 shrink-0 flex-col border-l-2 border-[#a9c6ee] bg-[#7b9bc8]">
    <div className="m-px h-2 border border-[#5b83b4] bg-white" />
    <button aria-label="Scroll up" className="flex h-[27px] items-center justify-center"><svg width="14" height="8"><path d="M0 8h14L7 0z" fill="#3c4a70" /></svg></button>
    <div className="flex h-[592px] items-center justify-center rounded-[2px] border border-[#5f7396] bg-[linear-gradient(90deg,#eef2f7,#d9e0ea_50%,#b9c5d6)]"><Lines w={8} h={8} c="#7c8aa0" rows={[[0, 0, 8], [0, 2, 8], [0, 4, 8], [0, 6, 8]]} /></div>
    <button aria-label="Scroll down" className="mt-auto flex h-[27px] items-center justify-center"><svg width="14" height="8"><path d="M0 0h14L7 8z" fill="#33406b" /></svg></button>
  </div>
);

/* ---------- sheet tabs and status ---------- */
const TABBG = "bg-[linear-gradient(180deg,#dfeafa_0%,#d3e3f8_45%,#b9d1f3_50%,#cfe0f7_100%)]";
const Slant = ({ left, right }) => (
  <svg width="18" height="24" viewBox="0 0 18 24" className="shrink-0" preserveAspectRatio="none">
    <path d="M0 0h18L3 24H0z" fill={left} /><path d="M16 0h2v24H1z" fill={right} /><path d="M16.500 0L2 22" stroke="#7d93b8" strokeWidth="1" /><path d="M17.500 0L3 22.500 4 24" stroke="#fff" fill="none" />
  </svg>
);
const nav = ["M3 3v10M13 3v10L5 8z", "M10 3v10L4 8z", "M5 3v10l6-5z", "M12 3v10M3 3v10l7-5z"];
function SheetTabs() {
  const t = `flex h-full items-center ${TABBG} text-[18px] leading-6 text-[#15428b]`;
  return (
    <div className="flex h-[26px] shrink-0 border-b-2 border-t border-[#6f93c8] border-t-[#8ba6cf] bg-[linear-gradient(180deg,#7fa1d1,#a2bce1_40%,#9db6db)]">
      <div className={`flex w-[99px] items-center justify-between border-r border-[#8ba6cf] px-1.5 ${TABBG}`}>
        {nav.map((d, i) => <button key={i} aria-label={["First sheet", "Previous sheet", "Next sheet", "Last sheet"][i]}><svg width="16" height="16" viewBox="0 0 16 16"><path d={d} fill="#15428b" stroke="#15428b" strokeWidth="1" /></svg></button>)}
      </div>
      <div className={`w-[5px] ${TABBG}`} />
      <Slant left="#c9dcf6" right="#c9dcf6" /><button className={`${t} w-[64px]`}>Sheet1</button>
      <Slant left="#c9dcf6" right="#c9dcf6" /><button className={`${t} w-[97px] border-r border-[#8ba6cf] pl-0.5`}>SalesData</button>
      <button className="flex h-full w-[333px] items-center whitespace-nowrap bg-[linear-gradient(180deg,#fff_60%,#cfe0f7)] pl-2 font-['DejaVu_Sans_Condensed','Open_Sans',sans-serif] text-[19px] font-bold leading-6 text-[#15428b]">LITA Capstone Dataset (Autosave</button>
      <Slant left="#f4f8fe" right="#c9dcf6" /><button className={`${t} w-[65px]`}>Sheet3</button>
      <Slant left="#c9dcf6" right="#c9dcf6" /><button className={`${t} w-[135px] pl-[3px]`}>CustomerData</button>
      <Slant left="#c9dcf6" right="#c9dcf6" />
      <button aria-label="Insert worksheet" className={`flex w-3.5 justify-center ${TABBG}`}><svg width="24" height="20" viewBox="0 0 24 20" className="shrink-0"><path d="M4 5h17v11l-3 2H7z" fill="#e8edf7" stroke="#6c7b97" /><path d="M18 5h3v11l-3 2z" fill="#4d6088" /><path d="M5 0v10M0 5h10M1.500 1.500l7 7M8.500 1.500l-7 7" stroke="#d98a1e" strokeWidth="1.800" /><circle cx="5" cy="5" r="2" fill="#fff" /></svg></button>
      <svg width="18" height="24" viewBox="0 0 18 24" className="shrink-0"><path d="M0 0h16L2 24H0z" fill="#c9dcf6" /><path d="M16.500 0L2 24" stroke="#fff" fill="none" /></svg>
      <div className="min-w-0 flex-1" />
      <div className="my-px w-[11px] border-2 border-[#6486b4] bg-white" />
      <div className="flex w-[736px] items-center border-t border-[#6d8fbe] bg-[#7898c2]">
        <button aria-label="Scroll left" className="pl-2.5"><svg width="8" height="15"><path d="M8 0v15L0 7.500z" fill="#4b5478" /></svg></button>
        <div className="ml-auto flex h-[22px] w-[231px] items-center justify-center border border-[#5d7094] bg-[linear-gradient(180deg,#eceff3_50%,#cdd6e1_50%,#dbe2ea)]"><svg width="8" height="8"><path d="M.5 0v8M3 0v8M5.500 0v8M7.500 0v8" stroke="#7c8592" /></svg></div>
        <button aria-label="Scroll right" className="px-[9px]"><svg width="8" height="15"><path d="M0 0v15l8-7.500z" fill="#3d4872" /></svg></button>
      </div>
      <div className="my-px w-[11px] border-2 border-[#6486b4] bg-white" />
      <div className="w-[25px] bg-[#7a9fd4]" />
    </div>
  );
}

const RoundBtn = ({ plus }) => (
  <button aria-label={plus ? "Zoom in" : "Zoom out"}><svg width="26" height="26" viewBox="0 0 26 26"><circle cx="13" cy="13" r="11" fill="#dfe8f5" stroke="#5d7aa8" strokeWidth="1.400" /><circle cx="13" cy="13" r="9.600" fill="none" stroke="#fff" /><path d={plus ? "M6.500 13h13M13 6.500v13" : "M7.500 13h11"} stroke="#33415e" strokeWidth="3" /></svg></button>
);
function StatusBar() {
  return (
    <div className="flex h-8 shrink-0 bg-[linear-gradient(180deg,#fff_0%,#fff_6%,#d7e6f9_7%,#c8dcf8_35%,#b3cef5_40%,#d7e5f9_90%,#aecdf5_95%)] text-[15px] text-[#15306b]">
      <div className="flex w-[60px] items-center border-r border-[#9dbbe4] pl-2">Ready</div>
      <div className="flex-1 border-l border-white" />
      <div className="flex items-center border-l-2 border-[#5b83b4] bg-[linear-gradient(180deg,#bdd7fb,#a3c3f0_40%,#86a9db_50%,#7fa4d6)] pl-1.5 pr-1">
        <div className="flex h-[29px] w-[84px] overflow-hidden rounded-[2px] border border-[#6f93c8]">
          <IB label="Normal view" on><svg width="20" height="16"><rect width="20" height="16" fill="#555" /><path d="M2 2h4v3H2zM8 2h4v3H8zM14 2h4v3h-4zM2 7h4v3H2zM8 7h4v3H8zM14 7h4v3h-4zM2 12h4v2H2zM8 12h4v2H8zM14 12h4v2h-4z" fill="#fff" /></svg></IB>
          <IB label="Page layout view"><svg width="20" height="18"><rect x="1" y="1" width="18" height="16" fill="#b9bec6" stroke="#555" strokeWidth="2" /><rect x="5.500" y="3.500" width="9" height="11" fill="#fff" stroke="#555" /><path d="M7.500 6h5M7.500 9h5M7.500 12h5" stroke="#555" /></svg></IB>
          <IB label="Page break view"><svg width="20" height="18"><rect x="1" y="1" width="18" height="16" fill="#b9bec6" stroke="#555" strokeWidth="2" /><path d="M2 2h5v10H2zM8 2h5v10H8z" fill="#fff" stroke="#555" /></svg></IB>
        </div>
        <span className="w-[58px] pl-2.5">100%</span>
        <RoundBtn />
        <input type="range" aria-label="Zoom" defaultValue="50" className="h-6 w-[151px] appearance-none bg-[linear-gradient(180deg,transparent_46%,#5d7fb0_46%,#5d7fb0_50%,#dbe8fa_50%,#dbe8fa_56%,transparent_56%)] [&::-webkit-slider-thumb]:h-[19px] [&::-webkit-slider-thumb]:w-3 [&::-webkit-slider-thumb]:appearance-none [&::-webkit-slider-thumb]:rounded-b-[6px] [&::-webkit-slider-thumb]:border-2 [&::-webkit-slider-thumb]:border-[#45628f] [&::-webkit-slider-thumb]:bg-[#e8f0fb]" />
        <RoundBtn plus />
      </div>
    </div>
  );
}

/* ---------- taskbar ---------- */
const OfficeDoc = ({ id, a, b, children }) => (
  <svg width="36" height="36" viewBox="0 0 36 36">
    <defs><linearGradient id={id} x1="0" y1="0" x2=".3" y2="1"><stop offset="0" stopColor="#f4f7f4" /><stop offset=".5" stopColor={a} /><stop offset="1" stopColor={b} /></linearGradient></defs>
    <path d="M1 31V14C1 6 6 1.500 13 1.500h17V31z" fill={`url(#${id})`} stroke={a} strokeWidth="1.500" />
    {children}
  </svg>
);
const icons = {
  "Task view": <svg width="36" height="36" viewBox="0 0 36 36"><rect x="0" y="11" width="27" height="24" rx="1" fill="#5f5f5f" /><rect x="9" y="2" width="27" height="24" rx="1" fill="#f2f2f2" /><rect x="9" y="11" width="18" height="15" fill="#bdbdbd" /></svg>,
  Chat: <svg width="36" height="36" viewBox="0 0 36 36"><defs><linearGradient id="cht" x1="0" y1="0" x2="1" y2="1"><stop offset="0" stopColor="#a06bb0" /><stop offset=".5" stopColor="#6a6fd8" /><stop offset="1" stopColor="#5058c8" /></linearGradient></defs><path d="M18 1a17 17 0 1 1-7.500 32.500L1 35.500 3 27A17 17 0 0 1 18 1z" fill="url(#cht)" /><rect x="8" y="11" width="14" height="14" rx="2.500" fill="#fff" /><path d="M23.500 17l4.500-4v11l-4.500-4z" fill="#fff" /></svg>,
  Edge: <svg width="36" height="36" viewBox="0 0 36 36"><defs><linearGradient id="ed1" x1="0" y1="0" x2="1" y2=".5"><stop offset="0" stopColor="#2aa5ea" /><stop offset=".5" stopColor="#2dc5c9" /><stop offset="1" stopColor="#64dc55" /></linearGradient><linearGradient id="ed2" x1="0" y1="0" x2="0" y2="1"><stop offset="0" stopColor="#1593dd" /><stop offset="1" stopColor="#0a6fd2" /></linearGradient></defs>
    <path d="M0 18C0 7 8 0 18 0s18 7 18 15c0 6-4 9-9 9-4 0-6-1.500-5-3.500C24 16 20 13 16 12 8 9 1 12 0 18z" fill="url(#ed1)" /><path d="M0 17c1-6 8-8 14-6-3 2-5 6-4 11 2 8 9 12 14 13-2 1-4 1-6 1C7 36 0 28 0 17z" fill="url(#ed2)" /><path d="M14 13c-6 4-6 18 5 22 6 2 12-3 14.500-7-6 3-14 1-16-5-1-3 0-5 1-6 0-2-2-4-4.500-4z" fill="#0f58a8" /></svg>,
  "File Explorer": <svg width="36" height="36" viewBox="0 0 36 36"><path d="M0 4c0-1 1-2 2-2h9l4 4h9v6H0z" fill="#e0a000" /><path d="M0 8h12l4-3h18c1 0 2 1 2 2v26c0 1-1 2-2 2H2c-1 0-2-1-2-2z" fill="#ffc83a" /><path d="M6 35v-7c0-2.500 1.500-4 4-4h16c2.500 0 4 1.500 4 4v7z" fill="#1273c9" /><path d="M11 29.500h14" stroke="#0a4f94" strokeWidth="1.500" /></svg>,
  Store: <svg width="36" height="36" viewBox="0 0 36 36"><path d="M9.500 9V2h17v7" fill="none" stroke="#22b8f0" strokeWidth="2.200" /><path d="M0.500 5h35v27c0 2-1.500 4-4 4h-27c-2.500 0-4-2-4-4z" fill="#f2f2f4" /><path d="M9.500 7V5M26.500 7V5" stroke="#22b8f0" strokeWidth="2.200" /><path d="M10.500 13h7v7h-7z" fill="#f25022" /><path d="M18.500 13h7v7h-7z" fill="#7fba00" /><path d="M10.500 21h7v7h-7z" fill="#00a4ef" /><path d="M18.500 21h7v7h-7z" fill="#ffb900" /></svg>,
  Publisher: <OfficeDoc id="opb" a="#6a9c99" b="#0f5652"><path d="M20 9l14 1.500-2 24-9-3z" fill="#eef7f6" /><path d="M25 15h7M24.500 18.500h7M24 22h7M24 25.500h7M24 29h6" stroke="#2f8783" strokeWidth="1.800" /><path d="M12 5.500l14 1.500-3 24-14-2.500z" fill="#f5fbfa" /><path d="M14.500 9l8 1-.8 7-8-1z" fill="#12706c" /><path d="M12.800 20l8 1M12.300 24l8 1" stroke="#12706c" strokeWidth="2.200" /></OfficeDoc>,
  Excel: <OfficeDoc id="oxl" a="#59a531" b="#2c7e1e"><path d="M7 8l28 2-1.500 24L4 29z" fill="#f4faef" /><path d="M25 12l7 .5-.3 5-7-.6zM24.500 19.500l7 .7-.3 5-7-.7zM23.500 26.500l7 .8-.2 5-7-1zM15 25.500l6.500.8-.5 4.500-6.500-1zM7 24.500l6 .7-.5 4.500-6-1z" fill="#7cb360" /><path d="M8 9.500l5 .5 4 4 5-3-4.500 6L22 22l-5-.5-3.500-3-5 2.500 4-5z" fill="#1c6414" /></OfficeDoc>,
  "Power BI": <svg width="36" height="36" viewBox="0 0 36 36"><rect x="19" y="0" width="12" height="36" fill="#dd9a12" /><rect x="12" y="9" width="12" height="27" fill="#f0bb25" /><rect x="4" y="18" width="12" height="18" fill="#f8dc6c" /></svg>,
  PowerPoint: <OfficeDoc id="opp" a="#e8683a" b="#c53d14"><path d="M6 8l29 2-1.500 24L4 29z" fill="#fff0e6" /><path d="M9 11.500l22 1.800-1 15-22-3z" fill="#e8501a" /><circle cx="23.500" cy="20" r="6" fill="#fff" /><path d="M23.500 20l1-7 6 6z" fill="#e8501a" /><path d="M10.500 16l5 .5M10.500 19.500l5 .5M10 23l5 .7" stroke="#ffe0d0" strokeWidth="1.800" /></OfficeDoc>,
  Word: <OfficeDoc id="owd" a="#5d84c0" b="#1c448e"><path d="M13 5l22 1.500-2 27L9 28z" fill="#f1f5fc" /><path d="M13.500 9l2.500 9 4-6.500 1 7 4.500-9" fill="none" stroke="#1f479b" strokeWidth="2" /><path d="M26 11l6 .5M25.500 15l6 .5M12.500 22l18 2M12 26l18 2.500" stroke="#3f6cb8" strokeWidth="2" /></OfficeDoc>,
};
const running = ["Edge", "File Explorer", "Excel", "Power BI", "Word"];

function Taskbar() {
  return (
    <footer className="relative flex h-[72px] shrink-0 items-center bg-[linear-gradient(90deg,#1b2322_0%,#1a2523_24%,#13282b_30%,#152850_38%,#28203c_43%,#28213f_50%,#2a1a50_58%,#2a1270_63%,#301060_68%,#34124c_76%,#311246_82%,#291838_90%,#221c30_100%)] pt-px">
      <button aria-label="Widgets" className="pl-6"><svg width="36" height="33" viewBox="0 0 36 33"><rect width="36" height="33" rx="1.500" fill="#0c62b5" /><rect x="3" y="3" width="14" height="27" rx="1" fill="#f5f5f5" /><rect x="19.500" y="3" width="13.500" height="15" fill="#66d8ff" /><rect x="19.500" y="18" width="13.500" height="6" fill="#1aa0f5" /><rect x="19.500" y="24" width="13.500" height="6" fill="#0a84ea" /></svg></button>
      <div className="absolute left-[411px] top-0 flex h-full items-center pt-0.5">
        <button aria-label="Start"><svg width="36" height="36" viewBox="0 0 36 36"><defs><linearGradient id="win" x1="0" y1="0" x2="1" y2="1"><stop offset="0" stopColor="#7fe0ff" /><stop offset="1" stopColor="#0a93f5" /></linearGradient></defs><path d="M0 1h17v16.500H0zM18.500 1H35v16.500H18.500zM0 19h17v16.500H0zM18.500 19H35v16.500H18.500z" fill="url(#win)" /></svg></button>
        <label className="ml-5 flex h-12 w-[329px] items-center rounded-full border border-white/5 bg-white/10 pl-4">
          <svg width="24" height="24" viewBox="0 0 24 24"><circle cx="13.500" cy="9.500" r="8" fill="#ffffff22" stroke="#e6e6e6" strokeWidth="2" /><path d="M8 15.500L2 22" stroke="#e6e6e6" strokeWidth="2.600" /></svg>
          <input aria-label="Search" placeholder="Search" className="ml-3.5 w-52 bg-transparent text-[19px] text-[#d5d5d5] outline-none placeholder:text-[#d0d2d4]" />
        </label>
        <div className="ml-[3px] flex h-full">
          {Object.entries(icons).map(([n, ic]) => (
            <button key={n} aria-label={n} className="relative flex w-[66px] items-center justify-center">{ic}{running.includes(n) && <span className="absolute bottom-1.5 h-[5px] w-[9px] rounded-full bg-[#a79bb5]" />}</button>
          ))}
          <button aria-label="Snipping Tool" className="relative ml-[3px] mt-1 flex h-[60px] w-[60px] items-center justify-center rounded-lg border border-white/5 bg-white/10">
            <svg width="36" height="36" viewBox="0 0 36 36"><rect width="27" height="27" rx="2.500" fill="#eceef2" /><path d="M3 5h16M5 9.500v10" stroke="#d83b01" strokeWidth="4" strokeDasharray="4 2" fill="none" /><path d="M8 20.500h18M10 9h11v17" stroke="#8a9096" strokeWidth="3.500" fill="none" strokeOpacity=".9" /><path d="M8 7.500h12v11H8z" fill="#eceef2" /><circle cx="32" cy="19" r="3" fill="none" stroke="#22a4e8" strokeWidth="2.400" /><circle cx="19" cy="32" r="3" fill="none" stroke="#22a4e8" strokeWidth="2.400" /><path d="M26 21l4-1M21 26l-1 4" stroke="#22a4e8" strokeWidth="2.400" /></svg>
            <span className="absolute bottom-0 h-[5px] w-6 rounded-full bg-[#d99be0]" />
          </button>
        </div>
      </div>
      <div className="ml-auto flex items-center pr-[30px] text-white">
        <button aria-label="Show hidden icons"><svg width="18" height="11" viewBox="0 0 18 11"><path d="M.5 10L9 1.500 17.500 10" fill="none" stroke="#fff" strokeWidth="1.500" /></svg></button>
        <button aria-label="No internet" className="ml-[21px]"><svg width="24" height="24" viewBox="0 0 24 24" fill="none" stroke="#fff" strokeWidth="1.500"><path d="M11 23A11 11 0 1 1 22.800 11M1.500 8.500h20.500M1.500 15.500H10M11 22c-5-4-5-16 1-21 3 3 4 6 4 9M11.500 23C6 18 6 6 12 1" /><circle cx="17.500" cy="17.500" r="5.700" /><path d="M13.500 21.500l8-8" /></svg></button>
        <button aria-label="Volume" className="ml-3"><svg width="24" height="20" viewBox="0 0 24 20" fill="none" stroke="#fff" strokeWidth="1.500"><path d="M1 7v6h4l5 4.500v-15L5 7z" strokeLinejoin="round" /><path d="M13 7c1.500 2 1.500 4 0 6M16 4.500c3 3.500 3 7.500 0 11" /><path d="M19 2c4.500 5 4.500 11 0 16" stroke="#77707f" /></svg></button>
        <button aria-label="Battery" className="ml-3"><svg width="25" height="20" viewBox="0 0 25 20" fill="none" stroke="#fff" strokeWidth="1.600"><path d="M11 4h8c1.500 0 2 .5 2 2v9c0 1.500-.5 2-2 2h-9c-1.500 0-2-.5-2-2" /><path d="M22 8.500h2v4h-2z" fill="#fff" /><path d="M1 4h7v3.500c0 2-7 2-7 0zM2.500 1v3M6.500 1v3" fill="#fff" /><path d="M4.500 9v9" /><path d="M7 9h5v2L9.500 16H7z" fill="#fff" stroke="none" /></svg></button>
        <div className="ml-4 w-[84px] whitespace-nowrap text-right text-[16px] leading-[23px]"><div>1:39 PM</div><div>11/5/2024</div></div>
        <span className="ml-[11px] flex size-6 items-center justify-center rounded-full bg-[#d99be0] text-[14px] text-black">4</span>
      </div>
    </footer>
  );
}

export default function App() {
  return (
    <div className={`relative flex h-screen flex-col overflow-hidden bg-white text-black ${UI}`}>
      <OfficeButton />
      <TitleBar />
      <Tabs />
      <Ribbon />
      <FormulaBar />
      <div className="flex min-h-0 flex-1 border-t-4 border-[#cfdff3]">
        <main className="relative min-w-0 flex-1 overflow-hidden">
          <Sheet />
          <ClippedChart />
          <PieChart />
          <BarChart />
        </main>
        <VScroll />
      </div>
      <SheetTabs />
      <StatusBar />
      <Taskbar />
    </div>
  );
}
